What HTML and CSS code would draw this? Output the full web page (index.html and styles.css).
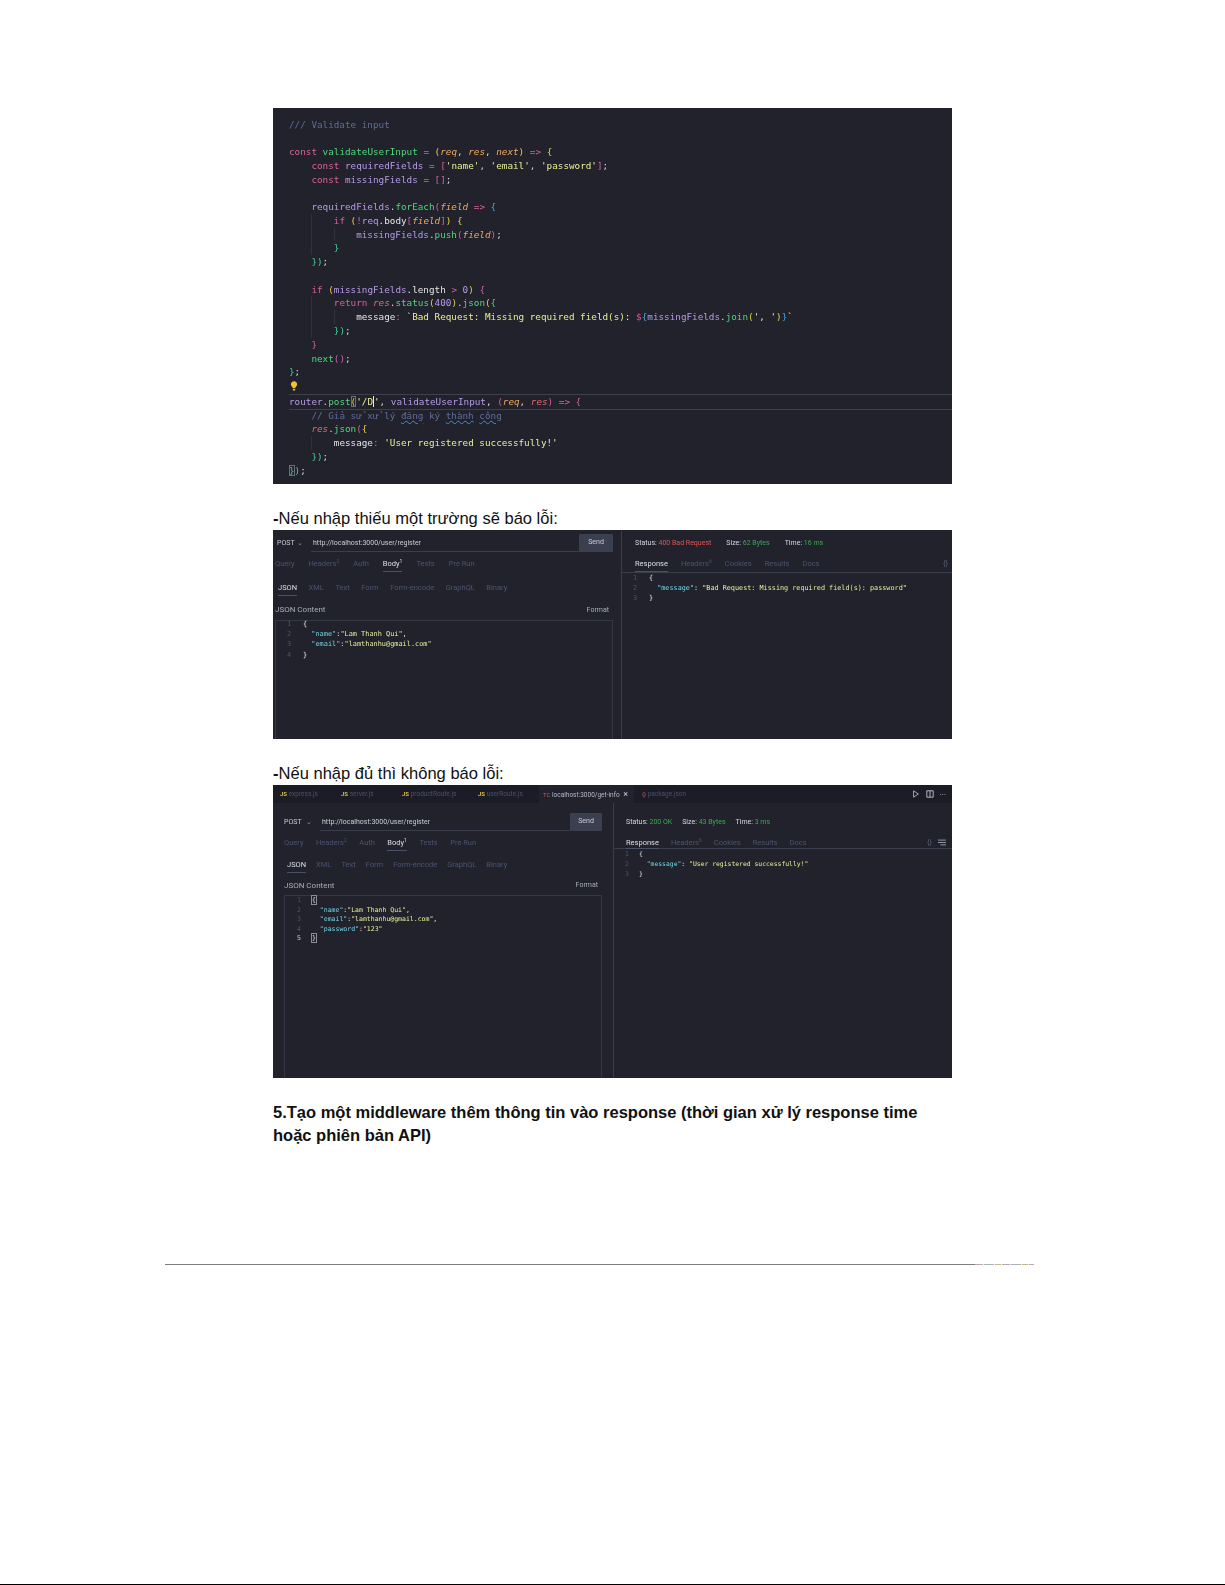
FILE: index.html
```html
<!DOCTYPE html>
<html lang="vi">
<head>
<meta charset="utf-8">
<title>Middleware</title>
<link rel="stylesheet" href="styles.css">
</head>
<body>
<div class="page">
  <main class="doc">
    <section class="shot code-shot">
      <div class="l"><span class="cm">/// Validate input</span></div>
      <div class="l"></div>
      <div class="l"><span class="kw">const</span> <span class="fn">validateUserInput</span> <span class="kw">=</span> <span class="y">(</span><span class="pa">req</span>, <span class="pa">res</span>, <span class="pa">next</span><span class="y">)</span> <span class="kw">=&gt;</span> <span class="y">{</span></div>
      <div class="l"><span class="i0"></span><span class="kw">const</span> <span class="v">requiredFields</span> <span class="kw">=</span> <span class="p">[</span><span class="st">'name'</span>, <span class="st">'email'</span>, <span class="st">'password'</span><span class="p">]</span>;</div>
      <div class="l"><span class="i0"></span><span class="kw">const</span> <span class="v">missingFields</span> <span class="kw">=</span> <span class="p">[]</span>;</div>
      <div class="l"></div>
      <div class="l"><span class="i0"></span><span class="v">requiredFields</span>.<span class="fn">forEach</span><span class="p">(</span><span class="pa">field</span> <span class="kw">=&gt;</span> <span class="b">{</span></div>
      <div class="l"><span class="i0"></span><span class="i"></span><span class="kw">if</span> <span class="y">(</span><span class="kw">!</span><span class="v">req</span><span class="w">.body</span><span class="p">[</span><span class="pa">field</span><span class="p">]</span><span class="y">)</span> <span class="y">{</span></div>
      <div class="l"><span class="i0"></span><span class="i"></span><span class="i"></span><span class="v">missingFields</span>.<span class="fn">push</span><span class="p">(</span><span class="pa">field</span><span class="p">)</span>;</div>
      <div class="l"><span class="i0"></span><span class="i"></span><span class="g">}</span></div>
      <div class="l"><span class="i0"></span><span class="g">})</span>;</div>
      <div class="l"></div>
      <div class="l"><span class="i0"></span><span class="kw">if</span> <span class="y">(</span><span class="v">missingFields</span><span class="w">.length</span> <span class="kw">&gt;</span> <span class="v">0</span><span class="y">)</span> <span class="p">{</span></div>
      <div class="l"><span class="i0"></span><span class="i"></span><span class="kw">return</span> <span class="pi">res</span>.<span class="fn">status</span><span class="y">(</span><span class="v">400</span><span class="y">)</span>.<span class="fn">json</span><span class="y">(</span><span class="g">{</span></div>
      <div class="l"><span class="i0"></span><span class="i"></span><span class="i"></span><span class="w">message</span><span class="kw">:</span> <span class="st">`Bad Request: Missing required field(s): </span><span class="kw">$</span><span class="b">{</span><span class="v">missingFields</span>.<span class="fn">join</span><span class="y">(</span><span class="st">', '</span><span class="y">)</span><span class="b">}</span><span class="st">`</span></div>
      <div class="l"><span class="i0"></span><span class="i"></span><span class="g">})</span>;</div>
      <div class="l"><span class="i0"></span><span class="p">}</span></div>
      <div class="l"><span class="i0"></span><span class="fn">next</span><span class="p">()</span>;</div>
      <div class="l"><span class="g">}</span>;</div>
      <div class="l"><svg class="bulb" viewBox="0 0 10 12" width="8" height="10"><path d="M5 0a3.9 3.9 0 0 0-2.4 7c.5.5.7 1 .7 1.6h3.4c0-.6.2-1.1.7-1.6A3.9 3.9 0 0 0 5 0z" fill="#f2c230"/><path d="M3.4 9.5h3.2v1.4L5.6 12H4.4l-1-1.1z" fill="#e8b020"/></svg></div>
      <div class="l active"><span class="v">router</span>.<span class="fn">post</span><span class="match y">(</span><span class="st">'/D</span><span class="caret"></span><span class="st">'</span>, <span class="v">validateUserInput</span>, <span class="p">(</span><span class="pa">req</span>, <span class="pi">res</span><span class="p">)</span> <span class="kw">=&gt;</span> <span class="p">{</span></div>
      <div class="l"><span class="i0"></span><span class="cm">// Giả sử xử lý <span class="sq">đăng</span> ký <span class="sq">thành</span> <span class="sq">công</span></span></div>
      <div class="l"><span class="i0"></span><span class="pi">res</span>.<span class="fn">json</span><span class="p">(</span><span class="y">{</span></div>
      <div class="l"><span class="i0"></span><span class="i"></span><span class="w">message</span><span class="kw">:</span> <span class="st">'User registered successfully!'</span></div>
      <div class="l"><span class="i0"></span><span class="g">})</span>;</div>
      <div class="l"><span class="match g">}</span><span class="g">)</span>;</div>
    </section>

    <p class="note note-a"><span class="dash">-</span>Nếu nhập thiếu một trường sẽ báo lỗi:</p>

    <section class="shot client client-a">
      <div class="pane pane-left">
        <div class="urlrow">
          <span class="method">POST</span><span class="chev">⌄</span>
          <span class="url">http://localhost:3000/user/register</span>
          <span class="send">Send</span>
        </div>
        <div class="tabs">
          <span>Query</span><span>Headers<sup>2</sup></span><span>Auth</span><span class="on">Body<sup>1</sup></span><span>Tests</span><span>Pre Run</span>
        </div>
        <div class="tabs sub">
          <span class="on">JSON</span><span>XML</span><span>Text</span><span>Form</span><span>Form-encode</span><span>GraphQL</span><span>Binary</span>
        </div>
        <div class="contentrow"><span>JSON Content</span><span class="format">Format</span></div>
        <div class="editor">
          <div class="el"><i>1</i><span class="w">{</span></div>
          <div class="el"><i>2</i>&nbsp;&nbsp;<span class="k">"name"</span><span class="w">:</span><span class="st">"Lam Thanh Qui"</span><span class="w">,</span></div>
          <div class="el"><i>3</i>&nbsp;&nbsp;<span class="k">"email"</span><span class="w">:</span><span class="st">"lamthanhu@gmail.com"</span></div>
          <div class="el"><i>4</i><span class="w">}</span></div>
        </div>
      </div>
      <div class="pane pane-right">
        <div class="status"><span>Status: <b class="red">400 Bad Request</b></span><span>Size: <b class="grn">62 Bytes</b></span><span>Time: <b class="grn">16 ms</b></span></div>
        <div class="tabs res">
          <span class="on">Response</span><span>Headers<sup>6</sup></span><span>Cookies</span><span>Results</span><span>Docs</span><span class="tail">{}</span>
        </div>
        <div class="reslines">
          <div class="el"><i>1</i><span class="w">{</span></div>
          <div class="el"><i>2</i>&nbsp;&nbsp;<span class="k">"message"</span><span class="w">:</span> <span class="st">"Bad Request: Missing required field(s): password"</span></div>
          <div class="el"><i>3</i><span class="w">}</span></div>
        </div>
      </div>
    </section>

    <p class="note note-b"><span class="dash">-</span>Nếu nhập đủ thì không báo lỗi:</p>

    <section class="shot client-b">
      <div class="filetabs">
        <span class="ft ft1"><b>JS</b> express.js</span>
        <span class="ft ft2"><b>JS</b> server.js</span>
        <span class="ft ft3"><b>JS</b> productRoute.js</span>
        <span class="ft ft4"><b>JS</b> userRoute.js</span>
        <span class="ft ft5"><em>TC</em> localhost:3000/get-info <u>×</u></span>
        <span class="ft ft6"><em class="pk">{}</em> package.json</span>
        <span class="ftools">
          <svg viewBox="0 0 10 10" width="8" height="8"><path d="M2 1l6 4-6 4z" fill="none" stroke="#c5c8d2"/></svg>
          <svg viewBox="0 0 10 10" width="8" height="8"><path d="M1 1h8v8H1zM5 1v8" fill="none" stroke="#d5d8e2"/></svg>
          <span class="dots">···</span>
        </span>
      </div>
      <div class="client client-c">
        <div class="pane pane-left">
          <div class="urlrow">
            <span class="method">POST</span><span class="chev">⌄</span>
            <span class="url">http://localhost:3000/user/register</span>
            <span class="send">Send</span>
          </div>
          <div class="tabs">
            <span>Query</span><span>Headers<sup>2</sup></span><span>Auth</span><span class="on">Body<sup>1</sup></span><span>Tests</span><span>Pre Run</span>
          </div>
          <div class="tabs sub">
            <span class="on">JSON</span><span>XML</span><span>Text</span><span>Form</span><span>Form-encode</span><span>GraphQL</span><span>Binary</span>
          </div>
          <div class="contentrow"><span>JSON Content</span><span class="format">Format</span></div>
          <div class="editor">
            <div class="el"><i>1</i><span class="w brk">{</span></div>
            <div class="el"><i>2</i>&nbsp;&nbsp;<span class="k">"name"</span><span class="w">:</span><span class="st">"Lam Thanh Qui"</span><span class="w">,</span></div>
            <div class="el"><i>3</i>&nbsp;&nbsp;<span class="k">"email"</span><span class="w">:</span><span class="st">"lamthanhu@gmail.com"</span><span class="w">,</span></div>
            <div class="el"><i>4</i>&nbsp;&nbsp;<span class="k">"password"</span><span class="w">:</span><span class="st">"123"</span></div>
            <div class="el"><i class="cur">5</i><span class="w brk">}</span></div>
          </div>
        </div>
        <div class="pane pane-right">
          <div class="status"><span>Status: <b class="grn">200 OK</b></span><span>Size: <b class="grn">43 Bytes</b></span><span>Time: <b class="grn">3 ms</b></span></div>
          <div class="tabs res">
            <span class="on">Response</span><span>Headers<sup>6</sup></span><span>Cookies</span><span>Results</span><span>Docs</span><span class="tail">{}</span>
            <svg class="menu" viewBox="0 0 10 8" width="8" height="7"><path d="M0 1h10M0 4h10M3 7h7" stroke="#aeb3c2"/></svg>
          </div>
          <div class="reslines">
            <div class="el"><i>1</i><span class="w">{</span></div>
            <div class="el"><i>2</i>&nbsp;&nbsp;<span class="k">"message"</span><span class="w">:</span> <span class="st">"User registered successfully!"</span></div>
            <div class="el"><i>3</i><span class="w">}</span></div>
          </div>
        </div>
      </div>
    </section>

    <h2 class="title">5.Tạo một middleware thêm thông tin vào response (thời gian xử lý response time<br>hoặc phiên bản API)</h2>
  </main>
  <div class="rule"><span class="rule-solid"></span><span class="rule-tail"></span></div>
  <div class="bottom"></div>
</div>
</body>
</html>
```

FILE: styles.css
```css
* { box-sizing: border-box; }
html, body { margin: 0; padding: 0; background: #fff; }
.page {
  width: 1225px;
  height: 1585px;
  display: flex;
  flex-direction: column;
  overflow: hidden;
}
.doc {
  margin-left: 273px;
  width: 679px;
  padding-top: 108px;
}
.shot {
  background: #21222c;
  width: 679px;
  overflow: hidden;
}

/* code screenshot */
.code-shot {
  height: 376px;
  padding: 9.5px 0 0 16px;
  font: 9.3px/13.78px "DejaVu Sans Mono", monospace;
  color: #d8d8d8;
}
.code-shot > * { filter: blur(.4px); }
.l { height: 13.78px; white-space: pre; }
.i0, .i { display: inline-block; width: 22.4px; height: 13.78px; vertical-align: top; }
.i { border-left: 1px solid #30323f; }
.cm { color: #5f6d9c; }
.kw { color: #d9609c; }
.fn { color: #4fd97a; }
.v { color: #b79ae8; }
.w { color: #e4e4e4; }
.pa { color: #f0a860; font-style: italic; }
.pi { color: #e06a6a; font-style: italic; }
.st { color: #e9ee96; }
.y { color: #e6d23e; }
.p { color: #d45fa8; }
.b { color: #4aa3df; }
.g { color: #3fcf9a; }
.sq { text-decoration: underline wavy #3f8fd8 1px; }
.bulb { display: block; margin: 2px 0 0 1px; }
.active { box-shadow: 0 -1px 0 #3e404c, 0 1px 0 #3e404c; width: 664px; }
.match { outline: 1px solid #6a6d7a; outline-offset: -1px; }
.caret { display: inline-block; width: 1px; height: 11px; background: #e8e8e8; vertical-align: -2px; }

/* notes */
.note {
  margin: 0;
  font: 16.55px/20px "Liberation Sans", Arial, sans-serif;
  color: #111;
}
.dash { font-weight: 700; }
.note-a { padding-top: 25px; height: 46px; }
.note-b { padding-top: 25px; height: 46px; }

/* REST client */
.client { display: grid; font-family: Roboto, sans-serif; color: #9aa0b0; }
.client-a { grid-template-columns: 348px 331px; height: 209px; }
.client-c { grid-template-columns: 340px 339px; height: 275px; background: #21222c; }
.client-a .pane-left { padding: 3.5px 8px 0 2px; }
.client-c .pane-left { padding: 10px 11px 0 11px; }
.client-a .editor .el:first-child { margin-top: -1.5px; }
.pane { min-width: 0; filter: blur(.4px); display: flex; flex-direction: column; }
.pane-right { border-left: 1px solid #3a3d4b; }
.urlrow { display: flex; align-items: center; height: 18px; font-size: 7px; }
.method { color: #c6c9d4; width: 22px; padding-left: 2px; }
.chev { color: #8a90a2; width: 14px; line-height: 8px; }
.url { flex: 1; color: #c9ccd6; height: 18px; line-height: 18px; border-bottom: 1px solid #3a3d4b; padding-left: 2px; }
.send { width: 34px; height: 18px; line-height: 17px; background: #3b4050; color: #c9ccd6; text-align: center; border-radius: 1px; }
.client-c .send { width: 32px; }
.tabs { display: flex; align-items: center; height: 24px; font-size: 7.5px; color: #4c5370; gap: 14px; }
.tabs sup { font-size: 5px; line-height: 0; }
.tabs .on { color: #dcdee6; position: relative; }
.tabs .on::after { content: ""; position: absolute; left: 0; right: 0; bottom: -4px; height: 1px; background: #4a5068; }
.tabs.sub { gap: 11.5px; margin-left: 3px; }
.tabs.res { border-bottom: 1px solid #3a3d4b; height: 18px; padding: 0 4px 0 13px; gap: 13px; }
.tabs .tail { margin-left: auto; color: #5a6078; }
.tabs .menu { margin-left: -6px; }
.contentrow { display: flex; justify-content: space-between; align-items: center; height: 20px; font-size: 8px; color: #a8adba; padding-right: 2px; }
.format { font-size: 7px; padding-right: 2px; color: #a8adba; }
.editor { flex: 1; border: 1px solid #343745; border-bottom: 0; font-family: "DejaVu Sans Mono", monospace; font-size: 6.9px; }
.el { height: 10.2px; line-height: 10.2px; white-space: pre; }
.el i { display: inline-block; width: 27px; padding-left: 11px; font-style: normal; color: #4c5370; }
.reslines { font-family: "DejaVu Sans Mono", monospace; font-size: 6.8px; }
.k { color: #6fd6e6; }
.brk { outline: 1px solid #8a8d98; }
.cur { color: #d0d2da !important; }
.status { display: flex; align-items: center; gap: 15px; height: 25px; padding-left: 13px; font-size: 7px; color: #d5d8e0; }
.status b { font-weight: 400; }
.red { color: #e25555; }
.grn { color: #3fa84f; }

/* file tabs */
.client-b { height: 293px; }
.filetabs {
  height: 18px;
  background: #1b1c25;
  display: flex;
  align-items: center;
  font: 6.5px Roboto, sans-serif;
  color: #4a5170;
  filter: blur(.3px);
}
.ft { height: 18px; line-height: 18px; white-space: nowrap; }
.ft b { color: #d6bf3a; font-size: 6px; }
.ft em { color: #c25a5a; font-style: normal; font-size: 6px; }
.ft u { text-decoration: none; color: #d0d2da; font-size: 9px; margin-left: 2px; }
.ft1 { width: 61px; padding-left: 7px; }
.ft2 { width: 61px; padding-left: 7px; }
.ft3 { width: 76px; padding-left: 7px; }
.ft4 { width: 68px; padding-left: 7px; }
.ft5 { width: 95px; padding-left: 4px; background: #21222c; color: #b5b8c4; }
.ft6 { padding-left: 8px; }
.ftools { margin-left: auto; display: flex; align-items: center; gap: 6px; padding-right: 6px; }
.dots { color: #c5c8d2; font-size: 8px; }

/* third screenshot */
.client-c .method { padding-left: 0; }
.client-c .pane-left .tabs { height: 23px; gap: 12.5px; }
.client-c .pane-left .tabs.sub { height: 21px; gap: 10px; }
.client-c .editor { font-size: 6.5px; }
.client-c .el { height: 9.6px; line-height: 9.6px; }
.client-c .el i { width: 27px; padding-left: 12px; }
.client-c .status { height: 30px; margin-top: 4px; gap: 10px; padding-left: 12px; }
.client-c .tabs.res { height: 12px; padding: 0 6px 0 12px; gap: 12px; }
.client-c .tabs.res .on::after { bottom: -2px; }
.client-c .reslines { font-size: 6.4px; padding-top: 1px; }
.client-c .reslines .el { height: 9.8px; line-height: 9.8px; }
.client-c .reslines .el i { width: 25px; padding-left: 11px; }

/* heading */
.title {
  margin: 23px 0 0;
  width: 679px;
  font: 700 16.5px/22.5px "Liberation Sans", Arial, sans-serif;
  color: #111;
}

/* footer */
.rule {
  margin: 117.5px 0 0 165px;
  width: 869px;
  height: 1.5px;
  display: flex;
  flex: none;
}
.rule-solid { width: 810px; background: #7d7d7d; }
.rule-tail {
  flex: 1;
  background: repeating-linear-gradient(90deg, #b8aab4 0 8px, #e8e8e8 8px 9px, #a8b4b4 9px 19px, #f2f2f2 19px 20px, #c4b88e 20px 26px, #eee 26px 27px);
}
.bottom { margin-top: auto; height: 1.5px; background: #000; flex: none; }
```
